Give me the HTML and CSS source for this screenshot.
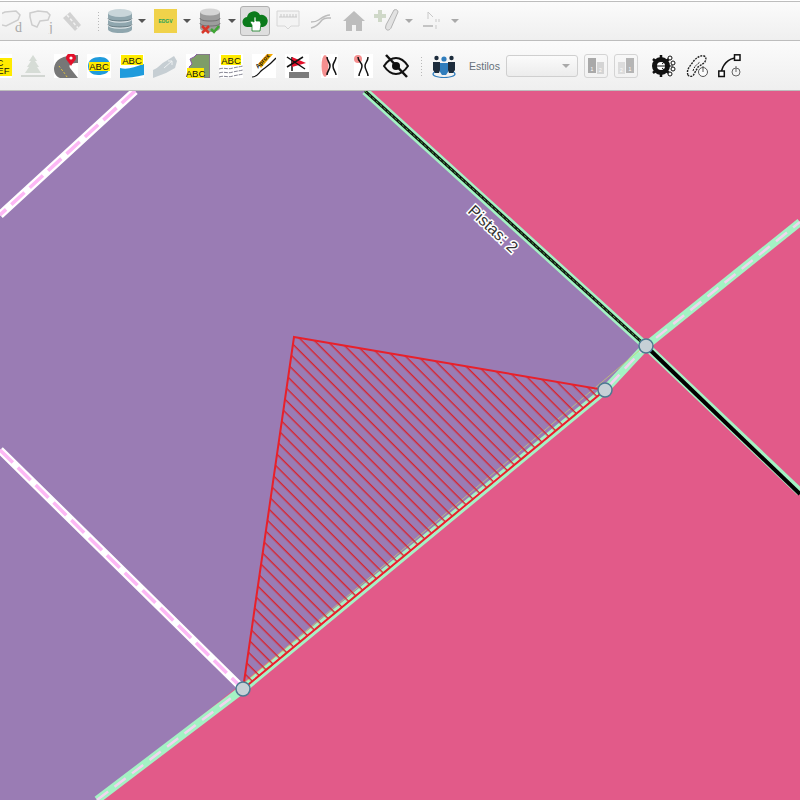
FILE: index.html
```html
<!DOCTYPE html>
<html lang="en">
<head>
  <meta charset="UTF-8">
  <title>Mapa</title>
  <link rel="stylesheet" href="styles.css">
</head>
<body>
  <div class="toolbar toolbar-top">
    <span class="slot w30 first-top"><svg width="26" height="26" viewBox="0 0 26 26"><path d="M-6 8l9-4 11-1 4 4-2 5-12 6-8-2z" class="off-line"/><text x="13" y="24" class="off-text">d</text></svg></span>
    <span class="slot w30"><svg width="26" height="26" viewBox="0 0 26 26"><path d="M1 5l8-2 9 1 3 3-2 5-8 1-3 6-5-2-2-8z" class="off-line"/><text x="20" y="24" class="off-text">j</text></svg></span>
    <span class="slot w30"><svg width="24" height="24" viewBox="0 0 24 24"><path d="M3 9l7-6 11 13-6 6z" fill="#d2d2d2"/><path d="M7 6l11 13" stroke="#f2f2f2" stroke-width="1.5" stroke-dasharray="3 2"/></svg></span>
    <span class="grip grip-top"></span>
    <span class="slot w28 gap-db"><svg width="26" height="26" viewBox="0 0 26 26"><path d="M1 5v16c0 2.500 5 4 12 4s12-1.500 12-4V5z" fill="#8fa6ae"/><ellipse cx="13" cy="5" rx="12" ry="4" fill="#c9d6da"/><path d="M1 10c0 3 5 4 12 4s12-1 12-4M1 16c0 3 5 4 12 4s12-1 12-4" fill="none" stroke="#dfe7ea" stroke-width="1.500"/><path d="M1 10c0 2 5 3 12 3s12-1 12-3M1 16c0 2 5 3 12 3s12-1 12-3" fill="none" stroke="#4f6168" stroke-width=".7"/></svg></span>
    <span class="caret"></span>
    <span class="edgv">EDGV</span>
    <span class="caret"></span>
    <span class="slot w26 db-check"><svg width="22" height="26" viewBox="0 0 22 26"><path d="M1 4v16c0 2 4 4 10 4s10-2 10-4V4z" fill="#9d9d9d"/><ellipse cx="11" cy="4" rx="10" ry="3.500" fill="#d5d5d5"/><path d="M1 10c0 2 4 3 10 3s10-1 10-3M1 15c0 2 4 3 10 3s10-1 10-3" fill="none" stroke="#666" stroke-width=".8"/><path d="M3 18l7 7M10 18l-7 7" stroke="#d9382a" stroke-width="2.500"/><path d="M12 21l3 3 5-6" fill="none" stroke="#3fa535" stroke-width="2.500"/></svg></span>
    <span class="caret"></span>
    <span class="btn-on"><svg width="26" height="22" viewBox="0 0 26 22"><path d="M6 17a5 5 0 0 1-1-10 7 7 0 0 1 13-2 6 6 0 0 1 3 12z" fill="#0b7a1b"/><path d="M10 21v-6l-2-3 2-1 2 1V7h2v4h4l1 3-1 7z" fill="#fff" stroke="#0b7a1b" stroke-width=".8"/></svg></span>
    <span class="slot w24 ruler-slot"><svg width="24" height="24" viewBox="0 0 24 24"><path d="M1 2h22v15H15l-3 3-3-3H1z" fill="#f3f3f3" stroke="#d6d6d6"/><path d="M3 8h18M5 5v3M8 5v3M11 5v3M14 5v3M17 5v3M20 5v3" stroke="#c9c9c9" fill="none"/></svg></span>
    <span class="slot w33 line-slot"><svg width="22" height="20" viewBox="0 0 22 20"><path d="M1 11c6 0 6-1 9-3s7-4 10-4M1 17c5-1 8-4 11-8 3-3 5-2 9-2" fill="none" stroke="#bcbcbc" stroke-width="1.500"/></svg></span>
    <span class="slot w33"><svg width="22" height="20" viewBox="0 0 22 20"><path d="M11 0L0 10h3v10h6v-6h4v6h6V10h3z" fill="#bdbdbd"/></svg></span>
    <span class="slot w33"><svg width="26" height="26" viewBox="0 0 26 26"><path d="M4 2h4v4h4v4H8v4H4v-4H0V6h4z" fill="#cfd8c8"/><path d="M20 2c2-1 4 0 4 2l-7 16c-1 2-4 3-5 1-1-1 0-3 0-4z" fill="#e2e2e2" stroke="#b3b3b3"/></svg></span>
    <span class="caret light"></span>
    <span class="slot w24 gap-s"><svg width="20" height="22" viewBox="0 0 20 22"><path d="M1 16h10" stroke="#c4c4c4" stroke-width="2"/><path d="M6 2v7M6 2l5 5M14 9v3M17 9v3M14 15v4" stroke="#c9c9c9" fill="none"/></svg></span>
    <span class="caret light"></span>
  </div>

  <div class="toolbar toolbar-bottom">
    <span class="slot w33 first-bottom"><svg width="24" height="24" viewBox="0 0 24 24"><rect width="24" height="24" fill="#fff"/><rect x="0" y="4" width="24" height="18" fill="#ffeb00"/><text x="12" y="12" class="abc">C</text><text x="12" y="20" class="abc">REF</text></svg></span>
    <span class="slot w33"><svg width="24" height="24" viewBox="0 0 24 24"><path d="M12 1l4 6-2 0 4 6-2 0 4 6H4l4-6-2 0 4-6-2 0z" fill="#d6dcd6"/><rect x="0" y="21" width="24" height="2" fill="#d2d6d2"/></svg></span>
    <span class="slot w33"><svg width="24" height="24" viewBox="0 0 24 24"><rect width="24" height="24" fill="#fff"/><path d="M0 14C1 6 8 1 24 1v8c-6 0-10 1-8 5l8 10H6C1 22 0 18 0 14z" fill="#777"/><path d="M5 12c2 3 5 6 8 11" stroke="#e7c93a" stroke-dasharray="2 2" fill="none"/><path d="M17 12c-3-5-5-6-5-8a5 5 0 0 1 10 0c0 2-2 3-5 8z" fill="#e3102a"/><circle cx="17" cy="4" r="1.600" fill="#fff"/></svg></span>
    <span class="slot w33"><svg width="24" height="24" viewBox="0 0 24 24"><rect width="24" height="24" fill="#fff"/><path d="M1 12c0-6 5-9 12-9 6 0 10 3 10 9 0 7-6 9-12 9-6 0-10-3-10-9z" fill="#1f9bdc"/><rect x="2" y="8" width="21" height="9" fill="#ffeb00"/><text x="12" y="16" class="abc">ABC</text></svg></span>
    <span class="slot w33"><svg width="24" height="24" viewBox="0 0 24 24"><rect width="24" height="24" fill="#fff"/><path d="M0 14c8 2 14-1 24-4v11c-8 2-16 3-24 3z" fill="#1f9bdc"/><rect x="1" y="1" width="22" height="10" fill="#ffeb00"/><text x="12" y="10" class="abc">ABC</text></svg></span>
    <span class="slot w33"><svg width="24" height="24" viewBox="0 0 24 24"><path d="M0 16c6-2 8-7 13-9l8-5 3 5-2 7-9 5-13 5z" fill="#c6ced3"/><path d="M11 14l8-7m-4 0h4v4" stroke="#eef1f2" fill="none"/></svg></span>
    <span class="slot w33"><svg width="24" height="24" viewBox="0 0 24 24"><rect width="24" height="24" fill="#fff"/><path d="M24 0H11l-3 3-4 2 2 5-3 3 6 11h15z" fill="#7e9d68" stroke="#8a5aa6"/><rect x="1" y="14" width="17" height="10" fill="#ffeb00"/><text x="9.500" y="23" class="abc">ABC</text></svg></span>
    <span class="slot w33"><svg width="24" height="24" viewBox="0 0 24 24"><rect width="24" height="24" fill="#fff"/><rect x="2" y="1" width="20" height="10" fill="#ffeb00"/><text x="12" y="10" class="abc">ABC</text><path d="M0 15c6-2 8 1 14-1 4-1 6-1 10-2M0 19c6-2 8 1 14-1 4-1 6-1 10-2M0 23c6-2 8 1 14-1 4-1 6-1 10-2" fill="none" stroke="#667" stroke-dasharray="4 1" stroke-width=".8"/></svg></span>
    <span class="slot w33"><svg width="24" height="24" viewBox="0 0 24 24"><rect width="24" height="24" fill="#fff"/><path d="M0 23c5 0 6-3 9-6s8-5 15-13" fill="none" stroke="#111" stroke-width="1.200"/><path d="M6 10L15 0h6L9 14z" fill="#f5a800"/><text x="0" y="0" class="abc small" transform="translate(12 8.500) rotate(-47)">Aprox</text></svg></span>
    <span class="slot w33"><svg width="24" height="24" viewBox="0 0 24 24"><rect width="24" height="24" fill="#fff"/><path d="M7 3v14" stroke="#111" stroke-width="1.500"/><path d="M7 3l14 6-14 4z" fill="#e3102a"/><path d="M2 3l18 12M2 13L18 3" stroke="#111" stroke-width="1.500"/><rect x="4" y="18" width="20" height="6" fill="#7b7b7b"/></svg></span>
    <span class="slot w33"><svg width="24" height="24" viewBox="0 0 24 24"><rect x="3" width="17" height="24" fill="#fff"/><ellipse cx="7" cy="12" rx="3.500" ry="11" fill="#f58f8f"/><path d="M9 3c0 4 3 5 3 9s-3 5-3 9M18 3c0 4-3 5-3 9s3 6 3 9" fill="none" stroke="#111" stroke-width="1.500"/></svg></span>
    <span class="slot w33"><svg width="24" height="24" viewBox="0 0 24 24"><rect x="3" width="19" height="24" fill="#fff"/><circle cx="7" cy="5" r="4" fill="#f58f8f"/><path d="M7 3c0 5 4 5 4 9s-3 6-3 10M17 3c0 5-3 5-3 9s3 6 3 10" fill="none" stroke="#111" stroke-width="1.500"/></svg></span>
    <span class="slot w33"><svg width="26" height="24" viewBox="0 0 26 24"><path d="M1 12c4-6 8-8 12-8s8 2 12 8c-4 6-8 8-12 8s-8-2-12-8z" fill="none" stroke="#111" stroke-width="2"/><circle cx="13" cy="12" r="4" fill="#111"/><path d="M3 1l21 22" stroke="#111" stroke-width="2.500"/></svg></span>
    <span class="grip"></span>
    <span class="slot w24 people"><svg width="24" height="24" viewBox="0 0 24 24"><ellipse cx="12" cy="20" rx="11" ry="3.500" fill="none" stroke="#2f7dbd" stroke-width="1.200"/><circle cx="4.500" cy="4" r="2.200" fill="#1d2c3c"/><circle cx="19.500" cy="4" r="2.200" fill="#1d2c3c"/><path d="M1 8h7v8l-1 3H3l-2-3zM16 8h7v8l-2 3h-4l-1-3z" fill="#1d2c3c"/><circle cx="12" cy="5" r="2.600" fill="#2f7dbd"/><path d="M8 9h8v9l-2 3h-4l-2-3z" fill="#2f7dbd"/></svg></span>
    <span class="style-label">Estilos</span>
    <span class="style-select"><span class="caret select-caret"></span></span>
    <span class="style-btn"><svg width="18" height="18" viewBox="0 0 18 18"><rect x="1" y="1" width="8" height="15" fill="#a9a9a9"/><rect x="10" y="5" width="7" height="12" fill="#d4d4d4"/><text x="5" y="14" class="off-num">1</text><text x="13.500" y="15" class="off-num">2</text></svg></span>
    <span class="style-btn"><svg width="18" height="18" viewBox="0 0 18 18"><rect x="1" y="5" width="7" height="12" fill="#dcdcdc"/><rect x="9" y="1" width="8" height="15" fill="#b5b5b5"/><text x="4.500" y="15" class="off-num">2</text><text x="13" y="14" class="off-num">1</text></svg></span>
    <span class="slot w24 gear"><svg width="24" height="24" viewBox="0 0 24 24"><path d="M9 1v22M1 5l16 14M1 19L17 5" stroke="#111" stroke-width="2.500"/><circle cx="9" cy="12" r="6.500" fill="#fff" stroke="#111" stroke-width="5"/><path d="M5 12h16M10 10l7-6M10 14l7 6" stroke="#111"/><circle cx="18" cy="4" r="2" fill="#fff" stroke="#111"/><circle cx="21" cy="9" r="2" fill="#fff" stroke="#111"/><circle cx="21" cy="15" r="2" fill="#fff" stroke="#111"/><circle cx="18" cy="20" r="2" fill="#fff" stroke="#111"/></svg></span>
    <span class="slot w24 trace"><svg width="24" height="24" viewBox="0 0 24 24"><path d="M2 21c-2-5 2-9 5-13s7-7 11-6c3 1 2 5 0 7l-6 4-4 7c-1 3-5 3-6 1z" fill="none" stroke="#222" stroke-width="1.400" stroke-dasharray="2 1"/><path d="M7 17c1-4 3-6 7-9" fill="none" stroke="#222" stroke-width="1" stroke-dasharray="2 1"/><circle cx="17" cy="18" r="4.500" fill="#fbfbfb" stroke="#555"/><path d="M17 12v6" stroke="#555"/></svg></span>
    <span class="slot w24 curve"><svg width="24" height="24" viewBox="0 0 24 24"><path d="M3 20C4 11 10 4 19 4" fill="none" stroke="#111" stroke-width="1.500"/><rect x="0.800" y="17" width="5.500" height="5.500" fill="#fff" stroke="#111" stroke-width="1.500"/><rect x="16.500" y="0.800" width="5.500" height="5.500" fill="#fff" stroke="#111" stroke-width="1.500"/><circle cx="18" cy="18" r="4" fill="none" stroke="#666"/><path d="M18 12v6" stroke="#666"/></svg></span>
  </div>

  <div class="map">
    <svg class="map-canvas" width="800" height="709" viewBox="0 91 800 709">
      <defs>
        <pattern id="hatch" width="8.900" height="8.900" patternUnits="userSpaceOnUse" patternTransform="rotate(45)">
          <rect x="0" y="0" width="8.900" height="1.400" fill="#d8232e"/>
        </pattern>
      </defs>
      <rect x="0" y="91" width="800" height="709" fill="#e25a89"/>
      <path d="M0 91H365L646 346 605 390 97 800H0z" fill="#9a7cb4"/>

      <path d="M135 91L0 215M0 450L243 689" class="road-white"/>
      <path d="M135 91L0 215M0 450L243 689" class="road-white-dash"/>

      <path d="M365 91L646 346 800 492" class="road-mint"/>
      <path d="M646 346L800 494" class="road-black"/>
      <path d="M365 91L646 346" class="road-black-thin"/>
      <path d="M365 91L646 346" class="road-green-dash"/>

      <path d="M97 800L243 689 605 390 646 346 800 222" class="road-mint"/>
      <path d="M97 800L243 689 605 390 646 346 800 222" class="road-pink-dash"/>
      <path d="M243 684L640 350" class="road-yellow"/>

      <path d="M294 337L605 390 243 689z" fill="url(#hatch)"/>
      <path d="M294 337L605 390 243 689z" class="parcel"/>

      <circle cx="243" cy="689" r="7" class="vertex"/>
      <circle cx="605" cy="390" r="7" class="vertex"/>
      <circle cx="646" cy="346" r="7" class="vertex"/>

      <text class="map-label" transform="translate(467 212) rotate(43)">Pistas: 2</text>
    </svg>
  </div>
</body>
</html>
```

FILE: styles.css
```css
html, body { margin: 0; padding: 0; }
body { width: 800px; height: 800px; overflow: hidden; background: #fff; font-family: "Liberation Sans", Arial, sans-serif; display: flex; flex-direction: column; }

.toolbar { display: flex; align-items: center; flex: none; overflow: hidden; background: linear-gradient(#fbfbfb, #efefef); }
.toolbar-top { height: 38px; border-top: 1px solid #bdbdbd; margin-top: 1px; }
.toolbar-bottom { height: 49px; border-top: 1px solid #bdbdbd; border-bottom: 1px solid #bdbdbd; }

.slot { display: flex; align-items: center; justify-content: center; flex: none; }
.w24 { width: 24px; }
.w26 { width: 26px; }
.w28 { width: 28px; }
.w30 { width: 30px; }
.w33 { width: 33px; }
.first-top { margin-right: -3px; }
.first-bottom { margin-left: -17px; }
.gap-db { margin-left: -3px; }
.db-check { margin: 0 1px 0 2px; }
.gap-s { margin: 0 5px 0 3px; }
.ruler-slot { margin-left: 6px; }
.line-slot { margin-left: 4px; }

.grip { width: 3px; height: 20px; margin: 0 9px 0 8px; flex: none; background: radial-gradient(circle, #b9b9b9 0.7px, transparent 1px) 0 0 / 3px 3px; }
.grip-top { margin-left: 10px; }
.caret { width: 0; height: 0; flex: none; margin: 0 4px; border-left: 4px solid transparent; border-right: 4px solid transparent; border-top: 4px solid #555; }
.caret.light { border-top-color: #a9a9a9; margin-left: 2px; }

.edgv { width: 23px; height: 24px; margin: 0 2px 0 4px; flex: none; background: #f0d24a; color: #22a35a; font-size: 5px; font-weight: bold; display: flex; align-items: center; justify-content: center; }
.btn-on { width: 30px; height: 30px; flex: none; display: flex; align-items: center; justify-content: center; box-sizing: border-box; border: 1px solid #b0b0b0; border-radius: 3px; background: #dedede; }

.style-label { margin-left: 13px; width: 37px; flex: none; font-size: 10.5px; color: #66707a; }
.style-select { width: 72px; height: 22px; flex: none; box-sizing: border-box; border: 1px solid #cfcfcf; border-radius: 3px; background: linear-gradient(#fbfbfb, #ececec); display: flex; align-items: center; justify-content: flex-end; }
.select-caret { border-top-color: #a9a9a9; margin: 0 7px 0 0; }
.style-btn { width: 24px; height: 24px; margin-left: 6px; flex: none; box-sizing: border-box; border: 1px solid #d4d4d4; border-radius: 3px; display: flex; align-items: center; justify-content: center; }
.gear { margin-left: 14px; }
.trace { margin-left: 10px; }
.curve { margin-left: 8px; }

.off-line { fill: #f3f3f3; stroke: #cdcdcd; stroke-width: 1.500; }
.off-text { font-family: "Liberation Serif", serif; font-size: 14px; fill: #a9a9a9; }
.off-num { font-size: 5px; fill: #fff; text-anchor: middle; }
.abc { font-family: "Liberation Sans", sans-serif; font-size: 9.500px; fill: #111; text-anchor: middle; }
.abc.small { font-size: 6px; font-weight: bold; }

.map { flex: 1; overflow: hidden; }
.map-canvas { display: block; }
.road-white { fill: none; stroke: #fff; stroke-width: 8; }
.road-white-dash { fill: none; stroke: #fdb8f5; stroke-width: 3.500; stroke-dasharray: 18 7; }
.road-mint { fill: none; stroke: #a4f2c4; stroke-width: 8; }
.road-black { fill: none; stroke: #000; stroke-width: 4; }
.road-black-thin { fill: none; stroke: #111; stroke-width: 3; }
.road-green-dash { fill: none; stroke: #3fb53c; stroke-width: 1; stroke-dasharray: 3 2; }
.road-pink-dash { fill: none; stroke: #f3d3f0; stroke-width: 2.500; stroke-dasharray: 14 8; }
.road-yellow { fill: none; stroke: #c9d36a; stroke-width: 1; opacity: 0.7; }
.parcel { fill: none; stroke: #e8202a; stroke-width: 2; stroke-linejoin: miter; }
.vertex { fill: #c6d0d6; stroke: #4c7a92; stroke-width: 1.500; }
.map-label { font-family: "Liberation Sans", sans-serif; font-size: 16px; fill: #333; stroke: #fff; stroke-width: 3px; paint-order: stroke; }
```
